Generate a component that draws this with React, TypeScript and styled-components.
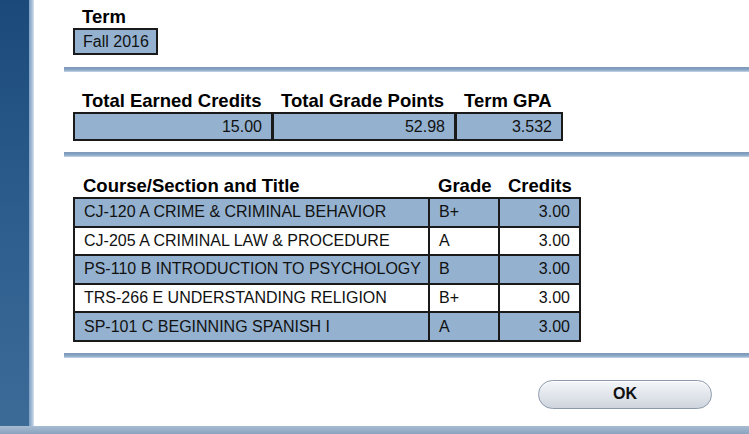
import styled, { createGlobalStyle } from "styled-components";

const courses = [
  { title: "CJ-120 A CRIME & CRIMINAL BEHAVIOR", grade: "B+", credits: "3.00" },
  { title: "CJ-205 A CRIMINAL LAW & PROCEDURE", grade: "A", credits: "3.00" },
  { title: "PS-110 B INTRODUCTION TO PSYCHOLOGY", grade: "B", credits: "3.00" },
  { title: "TRS-266 E UNDERSTANDING RELIGION", grade: "B+", credits: "3.00" },
  { title: "SP-101 C BEGINNING SPANISH I", grade: "A", credits: "3.00" },
];

function App() {
  return (
    <>
      <GlobalStyle />
      <Screen>
        <Frame>
          <Sidebar />
          <Edge />
          <Content>
            <Section>
              <Label>Term</Label>
              <TermBox>Fall 2016</TermBox>
            </Section>
            <Divider />
            <Section $top={18}>
              <Totals>
                <Label>Total Earned Credits</Label>
                <Label>Total Grade Points</Label>
                <Label>Term GPA</Label>
                <Cell $right $shaded>15.00</Cell>
                <Cell $right $shaded>52.98</Cell>
                <Cell $right $shaded>3.532</Cell>
              </Totals>
            </Section>
            <Divider $gap={11} />
            <Section $top={18}>
              <Courses>
                <colgroup>
                  <col style={{ width: 355 }} />
                  <col style={{ width: 70 }} />
                  <col style={{ width: 81 }} />
                </colgroup>
                <thead>
                  <tr>
                    <Head>Course/Section and Title</Head>
                    <Head>Grade</Head>
                    <Head>Credits</Head>
                  </tr>
                </thead>
                <tbody>
                  {courses.map((c, i) => (
                    <tr key={c.title}>
                      <Td $shaded={i % 2 === 0}>{c.title}</Td>
                      <Td $shaded={i % 2 === 0}>{c.grade}</Td>
                      <Td $shaded={i % 2 === 0} $right>{c.credits}</Td>
                    </tr>
                  ))}
                </tbody>
              </Courses>
            </Section>
            <Divider $gap={11} />
            <Actions>
              <OkButton>OK</OkButton>
            </Actions>
          </Content>
        </Frame>
        <BottomBar />
      </Screen>
    </>
  );
}

export default App;

const GlobalStyle = createGlobalStyle`
  html, body {
    margin: 0;
    padding: 0;
    background: #ffffff;
    font-family: "Liberation Sans", Arial, sans-serif;
  }
`;

const Screen = styled.div`
  width: 749px;
  height: 434px;
  display: flex;
  flex-direction: column;
  overflow: hidden;
`;

const Frame = styled.div`
  flex: 1;
  display: flex;
  min-height: 0;
`;

const Sidebar = styled.div`
  width: 29px;
  background: linear-gradient(180deg, #1b4a7a 0%, #2c5d8d 50%, #3d6b98 100%);
`;

const Edge = styled.div`
  width: 5px;
  background: linear-gradient(90deg, #7d9fc2 0%, #a9c0da 60%, #d8e3ef 100%);
`;

const Content = styled.div`
  flex: 1;
  display: flex;
  flex-direction: column;
  padding: 6px 0 0 30px;
  background: #ffffff;
`;

const Section = styled.div<{ $top?: number }>`
  padding: ${(p) => p.$top ?? 0}px 0 0 9px;
  display: flex;
  flex-direction: column;
  align-items: flex-start;
`;

const Label = styled.div`
  font-size: 18.5px;
  line-height: 21px;
  font-weight: 700;
  color: #000;
  padding: 0 0 1px 9px;
  white-space: nowrap;
`;

const TermBox = styled.div`
  width: 73px;
  height: 23px;
  padding: 0 0 0 8px;
  border: 2px solid #1a1a1a;
  background: #94b1cf;
  font-size: 16px;
  line-height: 23px;
  color: #111;
`;

const Divider = styled.div<{ $gap?: number }>`
  height: 5px;
  margin: ${(p) => p.$gap ?? 12}px 0 0 0;
  background: linear-gradient(180deg, #7a97b8 0%, #8aa7c6 60%, #c9d7e6 100%);
`;

const Totals = styled.div`
  display: grid;
  grid-template-columns: 199px 183px 107px;
`;

const Cell = styled.div<{ $right?: boolean; $shaded?: boolean }>`
  height: 25px;
  border: 2px solid #1a1a1a;
  margin-right: -1px;
  background: ${(p) => (p.$shaded ? "#94b1cf" : "#ffffff")};
  font-size: 16px;
  line-height: 25px;
  color: #111;
  text-align: ${(p) => (p.$right ? "right" : "left")};
  padding: 0 9px;
`;

const Courses = styled.table`
  border-collapse: collapse;
  table-layout: fixed;
  width: 506px;
`;

const Head = styled.th`
  font-size: 18.5px;
  line-height: 21px;
  font-weight: 700;
  color: #000;
  text-align: left;
  padding: 0 0 1px 9px;
  white-space: nowrap;
`;

const Td = styled.td<{ $right?: boolean; $shaded?: boolean }>`
  height: 26.6px;
  border: 2px solid #1a1a1a;
  background: ${(p) => (p.$shaded ? "#94b1cf" : "#ffffff")};
  font-size: 16px;
  line-height: 20px;
  color: #111;
  text-align: ${(p) => (p.$right ? "right" : "left")};
  padding: 0 9px;
  white-space: nowrap;
  overflow: hidden;
`;

const Actions = styled.div`
  flex: 1;
  display: flex;
  justify-content: flex-end;
  align-items: flex-start;
  padding: 22px 37px 0 0;
`;

const OkButton = styled.button`
  width: 174px;
  height: 29px;
  border-radius: 15px;
  border: 1px solid #8d9aab;
  background: linear-gradient(180deg, #f4f6f9 0%, #e2e6ec 50%, #cfd5dd 100%);
  box-shadow: inset 0 1px 0 #ffffff;
  font-family: "Liberation Sans", Arial, sans-serif;
  font-size: 16px;
  font-weight: 700;
  color: #111;
  cursor: pointer;
`;

const BottomBar = styled.div`
  height: 8px;
  background: linear-gradient(180deg, #a8bcd2 0%, #8aa3bf 100%);
`;
